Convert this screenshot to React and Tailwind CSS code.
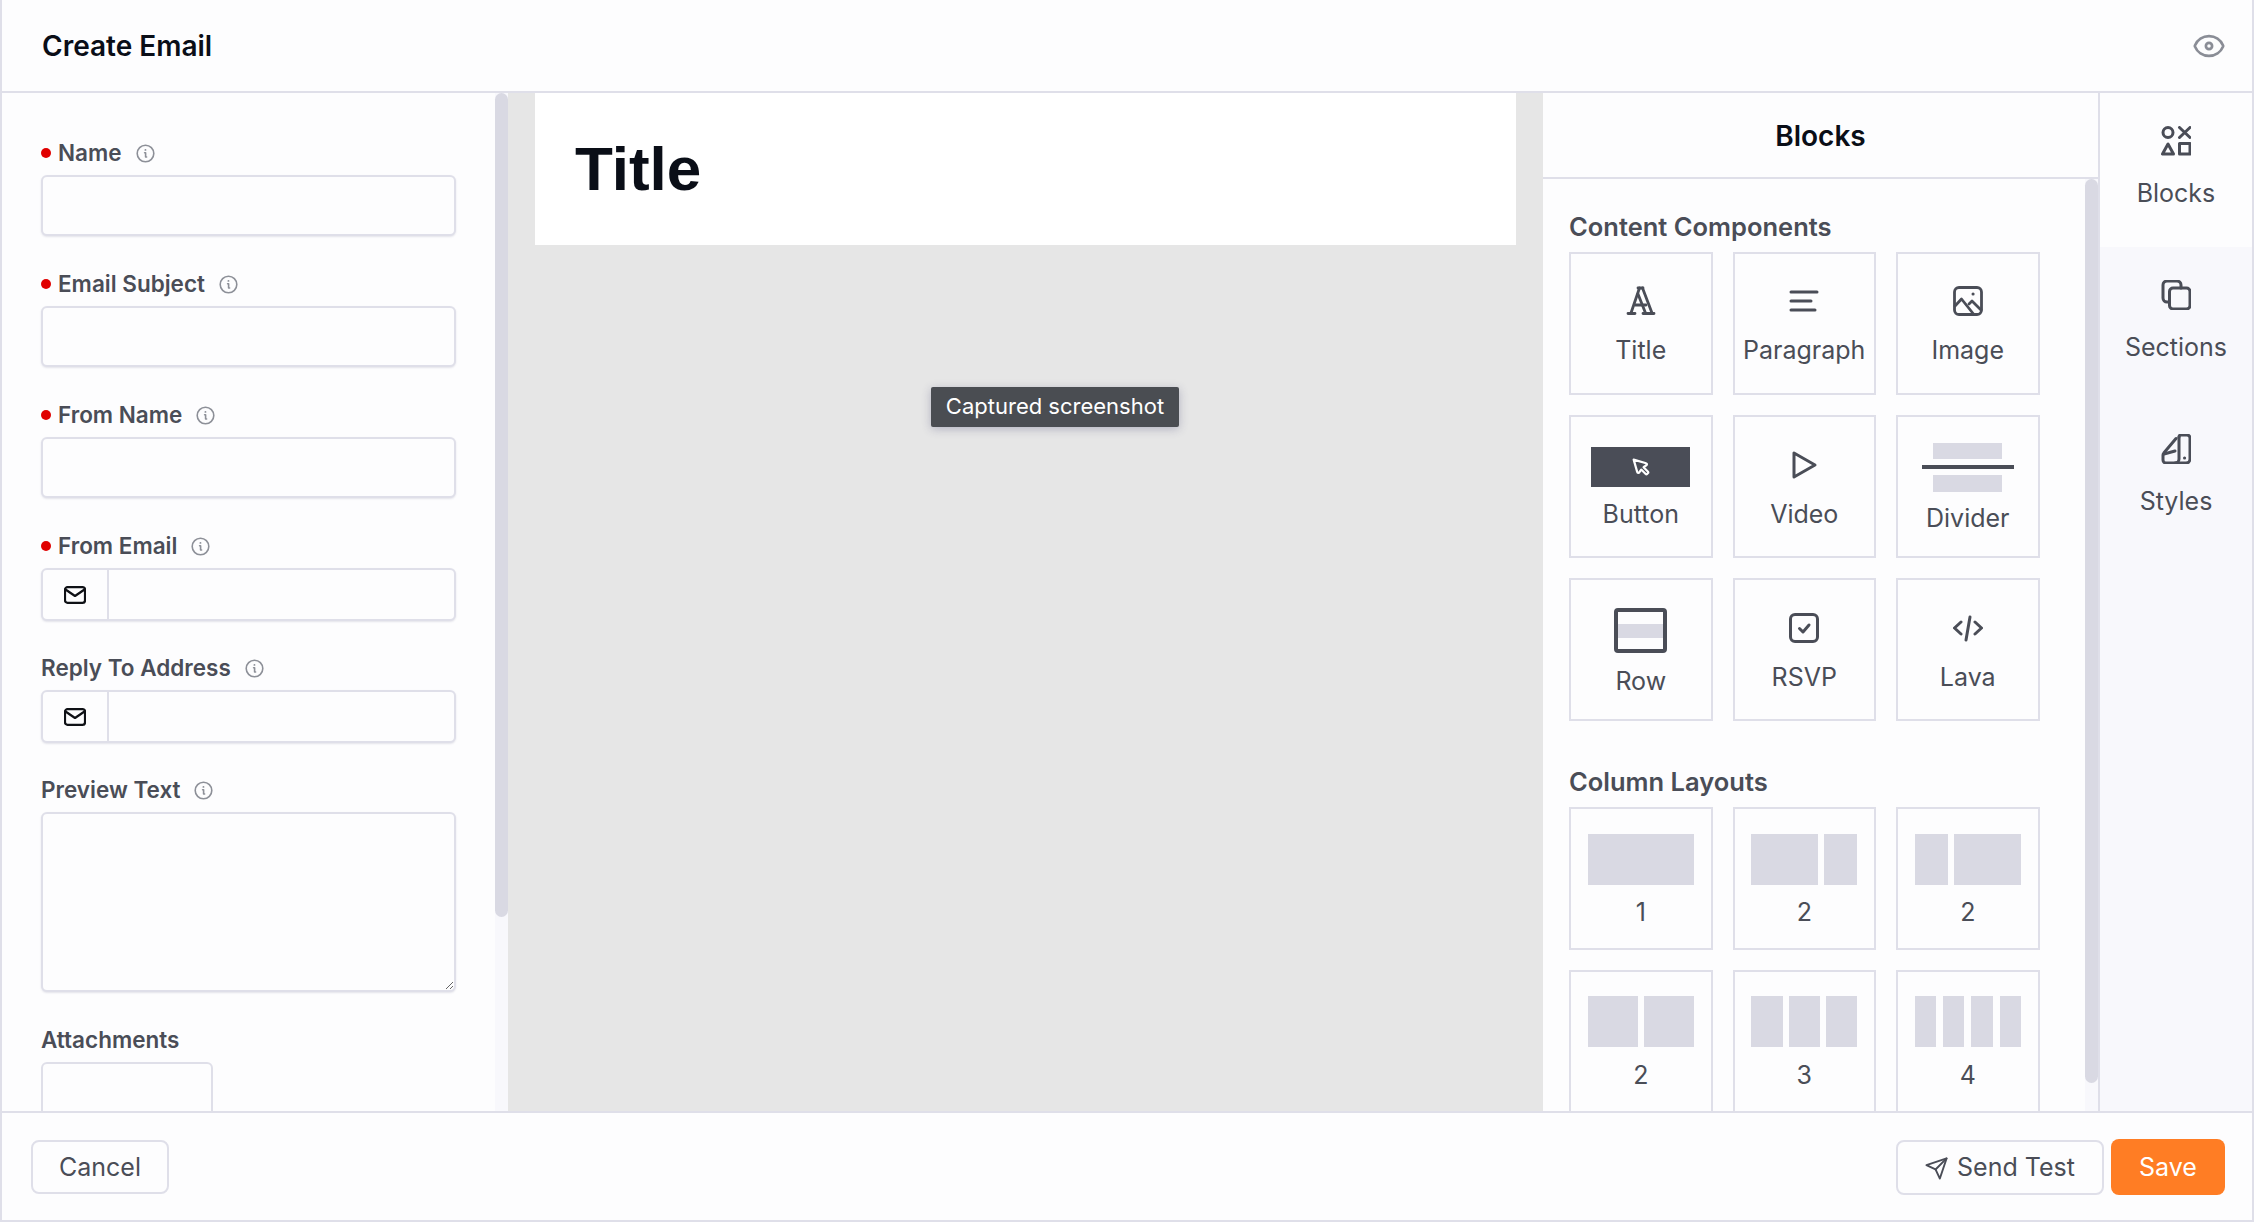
import React from "react";

const ink = "#4a4d57";

function Svg({ w, h, vb, children, sw = 2.5, color = ink, cls = "" }) {
  return (
    <svg width={w} height={h} viewBox={vb} fill="none" stroke={color} strokeWidth={sw} strokeLinecap="round" strokeLinejoin="round" className={"block shrink-0 " + cls}>
      {children}
    </svg>
  );
}

const Info = () => (
  <Svg w={19} h={19} vb="0 0 19 19" sw={1.6} color="#8d9098">
    <circle cx="9.5" cy="9.5" r="8.3" />
    <path d="M8.6 8.8h1v4.2h1" />
    <path d="M9.4 5.9h.1" strokeWidth="1.8" />
  </Svg>
);

const Mail = () => (
  <Svg w={22} h={18} vb="0 0 22 18" sw={2.2} color="#0f1116">
    <rect x="1" y="1.2" width="20" height="15.6" rx="2.5" />
    <path d="M1.5 3.5L11 10l9.5-6.5" />
  </Svg>
);

const Eye = () => (
  <Svg w={34} h={34} vb="0 0 24 24" sw={1.9} color="#8a8d96">
    <path d="M2.06 12.35a1 1 0 0 1 0-.7 10.75 10.75 0 0 1 19.88 0 1 1 0 0 1 0 .7 10.75 10.75 0 0 1-19.88 0" />
    <circle cx="12" cy="12" r="2.2" />
  </Svg>
);

const Send = () => (
  <Svg w={23} h={23} vb="0 0 24 24" sw={2} color={ink}>
    <path d="M22.5 1.5L11 13" />
    <path d="M22.5 1.5L15.5 22.5L11 13L1.5 8.5Z" />
  </Svg>
);

const BlocksIcon = () => (
  <Svg w={30} h={30} vb="0 0 30 30" sw={3}>
    <circle cx="7" cy="6.500" r="5" />
    <path d="M18.500 1.500l10.500 10M29 1.500L18.500 11.500" />
    <path d="M7 18L1.500 28h11z" />
    <rect x="18.500" y="17.500" width="10.500" height="10.500" />
  </Svg>
);

const SectionsIcon = () => (
  <Svg w={30} h={30} vb="0 0 30 30" sw={3}>
    <rect x="8.500" y="8" width="20.500" height="21" rx="3.500" />
    <path d="M8.500 22H6a4 4 0 0 1-4-4V5a4 4 0 0 1 4-4h10a4 4 0 0 1 4 4v3" />
  </Svg>
);

const StylesIcon = () => (
  <Svg w={30} h={30} vb="0 0 30 30" sw={3}>
    <path d="M18 3a2 2 0 0 1 2-2h6a3 3 0 0 1 3 3v21a4 4 0 0 1-4 4H5a3 3 0 0 1-3-3v-5a3 3 0 0 1 .8-2L15 4.500" />
    <path d="M18 3v22a4 4 0 0 1-4 4" />
    <path d="M3 20l11-3" />
    <path d="M23.500 24h.1" />
  </Svg>
);

const TitleIcon = () => (
  <Svg w={30} h={30} vb="0 0 30 30" sw={2.8}>
    <path d="M12 2h5" />
    <path d="M13.500 2L5 27" />
    <path d="M16.500 2L26 27" />
    <path d="M12 8L19.500 27" />
    <path d="M9 19h11" />
    <path d="M2 27.500h7M17 27.500h11" />
  </Svg>
);

const ParagraphIcon = () => (
  <Svg w={30} h={30} vb="0 0 30 30" sw={3}>
    <path d="M2 6h26M2 15h20M2 24h24" />
  </Svg>
);

const ImageIcon = () => (
  <Svg w={30} h={30} vb="0 0 30 30" sw={2.8}>
    <rect x="1.500" y="1.500" width="27" height="27" rx="4.500" />
    <path d="M2 20l6.500-7 12 15" />
    <path d="M16 18l3-3 9 9" />
    <path d="M20 8h.1" strokeWidth="3" />
  </Svg>
);

const VideoIcon = () => (
  <Svg w={30} h={30} vb="0 0 30 30" sw={3}>
    <path d="M5 3v24L26 15z" />
  </Svg>
);

const RsvpIcon = () => (
  <Svg w={30} h={30} vb="0 0 30 30" sw={3}>
    <rect x="1.500" y="1.500" width="27" height="27" rx="4.500" />
    <path d="M10.500 15.500l3.500 3.500 6-7" />
  </Svg>
);

const LavaIcon = () => (
  <Svg w={30} h={30} vb="0 0 30 30" sw={3}>
    <path d="M8 9l-6.500 6L8 21" />
    <path d="M22 9l6.500 6L22 21" />
    <path d="M17 4l-4 23" />
  </Svg>
);

const ButtonIcon = () => (
  <div className="flex h-[40px] w-[99px] items-center justify-center bg-[#4a4d57]">
    <Svg w={22} h={22} vb="0 0 24 24" sw={2.4} color="#ffffff">
      <path d="M7.904 17.563a1.2 1.2 0 0 0 2.228 .308l2.09 -3.093l4.907 4.907a1.067 1.067 0 0 0 1.509 0l1.047 -1.047a1.067 1.067 0 0 0 0 -1.509l-4.907 -4.907l3.113 -2.09a1.2 1.2 0 0 0 -.309 -2.228l-13.582 -3.904l3.904 13.563z" />
    </Svg>
  </div>
);

const DividerIcon = () => (
  <div className="flex w-[92px] flex-col items-center">
    <div className="h-[16px] w-[69px] bg-[#d9d9e3]" />
    <div className="mt-[6px] h-[4px] w-[92px] bg-[#4a4d57]" />
    <div className="mt-[6px] h-[17px] w-[69px] bg-[#d9d9e3]" />
  </div>
);

const RowIcon = () => (
  <div className="flex h-[45px] w-[53px] flex-col justify-center rounded-[4px] border-[4px] border-[#4a4d57] bg-[#fdfdfe]">
    <div className="h-[14px] w-full bg-[#d9d9e3]" />
  </div>
);

function Tile({ pad, gap, label, children }) {
  return (
    <div className={"flex h-[143px] w-full flex-col items-center border-2 border-[#dfdfe9] " + pad}>
      {children}
      <div className={"h-[32px] text-[25px] leading-[32px] text-[#4a4d57] " + gap}>{label}</div>
    </div>
  );
}

function Cols({ pad, gap, label, gapClass = "gap-[6px]", cols }) {
  return (
    <Tile pad={pad} gap={gap} label={label}>
      <div className={"flex h-[51px] w-[106px] " + gapClass}>
        {cols.map((c, i) => (
          <div key={i} className={"bg-[#d9d9e3] " + c} />
        ))}
      </div>
    </Tile>
  );
}

function Label({ text, required }) {
  return (
    <div className="mb-[8px] flex h-[28px] items-center">
      {required && <span className="mr-[7px] h-[10px] w-[10px] rounded-full bg-[#e00000]" />}
      <span className="text-[22.5px] font-semibold leading-[28px] text-[#4a4d57]">{text}</span>
      <span className="ml-[14px]"><Info /></span>
    </div>
  );
}

const inputCls = "block w-full rounded-[6px] border-2 border-[#dfdfe9] bg-[#fdfdfe] shadow-[0_1px_2px_rgba(70,70,110,0.14)] outline-none";

function TextField({ text, required }) {
  return (
    <div className="mb-[34px]">
      <Label text={text} required={required} />
      <input className={inputCls + " h-[61px]"} />
    </div>
  );
}

function MailField({ text, required }) {
  return (
    <div className="mb-[33px]">
      <Label text={text} required={required} />
      <div className="flex h-[53px] w-full overflow-hidden rounded-[6px] border-2 border-[#dfdfe9] bg-[#fdfdfe] shadow-[0_1px_2px_rgba(70,70,110,0.14)]">
        <div className="flex w-[66px] shrink-0 items-center justify-center border-r-2 border-[#dfdfe9]">
          <Mail />
        </div>
        <input className="min-w-0 flex-1 bg-transparent outline-none" />
      </div>
    </div>
  );
}

function Track({ thumb }) {
  return (
    <div className="w-[13px] shrink-0 bg-[#f8f8fc]">
      <div className={"w-full rounded-full bg-[#d9d9e3] " + thumb} />
    </div>
  );
}

function SideTab({ active, label, children }) {
  return (
    <div className={"flex h-[154px] flex-col items-center pt-[33px] " + (active ? "bg-[#fdfdfe]" : "bg-[#f8f8fc]")}>
      {children}
      <div className="mt-[21px] h-[32px] text-[25px] leading-[32px] text-[#4a4d57]">{label}</div>
    </div>
  );
}

export default function App() {
  return (
    <div className="flex h-screen flex-col overflow-hidden border-x-2 border-b-2 border-[#dfdfe9] bg-[#fdfdfe] font-['Inter',sans-serif]">
      <header className="flex h-[93px] shrink-0 items-center justify-between border-b-2 border-[#dfdfe9] pl-[40px] pr-[26px]">
        <h1 className="text-[28px] font-semibold leading-[36px] text-[#0a0e17]">Create Email</h1>
        <Eye />
      </header>

      <main className="flex min-h-0 flex-1 overflow-hidden">
        <section className="flex w-[506px] shrink-0">
          <div className="min-w-0 flex-1 overflow-hidden pl-[39px] pr-[39px] pt-[46px]">
            <TextField text="Name" required />
            <TextField text="Email Subject" required />
            <TextField text="From Name" required />
            <MailField text="From Email" required />
            <MailField text="Reply To Address" />
            <div className="mb-[34px]">
              <Label text="Preview Text" />
              <textarea className={inputCls + " h-[180px]"} />
            </div>
            <div className="mb-[8px] h-[28px] text-[22.5px] font-semibold leading-[28px] text-[#4a4d57]">Attachments</div>
            <div className="h-[120px] w-[172px] rounded-[6px] border-2 border-[#dfdfe9]" />
          </div>
          <Track thumb="h-[824px]" />
        </section>

        <section className="relative flex-1 bg-[#e6e6e6] px-[27px]">
          <div className="flex h-[152px] items-center bg-white pl-[40px] font-['Liberation_Sans',Arial,sans-serif] text-[62px] font-bold leading-[70px] text-[#0a0e17]">
            Title
          </div>
          <div className="absolute left-[423px] top-[294px] flex h-[40px] w-[248px] items-center justify-center rounded-[2px] bg-[#4a4d52] pb-[1px] text-[22px] text-white shadow-[0_2px_10px_rgba(60,60,110,0.3)]">
            Captured screenshot
          </div>
        </section>

        <section className="flex w-[555px] shrink-0 flex-col bg-[#fdfdfe]">
          <div className="flex h-[86px] shrink-0 items-center justify-center border-b-2 border-[#dfdfe9] pt-[1px] text-[28px] font-semibold text-[#0a0e17]">
            Blocks
          </div>
          <div className="flex min-h-0 flex-1">
            <div className="min-w-0 flex-1 overflow-hidden pl-[26px] pt-[33px]">
              <h2 className="mb-[10px] h-[30px] text-[25.5px] font-semibold leading-[30px] text-[#4a4d57]">Content Components</h2>
              <div className="mb-[46px] grid grid-cols-[143.5px_143.5px_143.5px] gap-[20px]">
                <Tile pad="pt-[32px]" gap="mt-[18px]" label="Title"><TitleIcon /></Tile>
                <Tile pad="pt-[32px]" gap="mt-[18px]" label="Paragraph"><ParagraphIcon /></Tile>
                <Tile pad="pt-[32px]" gap="mt-[18px]" label="Image"><ImageIcon /></Tile>
                <Tile pad="pt-[30px]" gap="mt-[11px]" label="Button"><ButtonIcon /></Tile>
                <Tile pad="pt-[33px]" gap="mt-[18px]" label="Video"><VideoIcon /></Tile>
                <Tile pad="pt-[26px]" gap="mt-[10px]" label="Divider"><DividerIcon /></Tile>
                <Tile pad="pt-[28px]" gap="mt-[12px]" label="Row"><RowIcon /></Tile>
                <Tile pad="pt-[33px]" gap="mt-[18px]" label="RSVP"><RsvpIcon /></Tile>
                <Tile pad="pt-[33px]" gap="mt-[18px]" label="Lava"><LavaIcon /></Tile>
              </div>
              <h2 className="mb-[10px] h-[30px] text-[25.5px] font-semibold leading-[30px] text-[#4a4d57]">Column Layouts</h2>
              <div className="grid grid-cols-[143.5px_143.5px_143.5px] gap-[20px]">
                <Cols pad="pt-[25px]" gap="mt-[11px]" label="1" cols={["flex-1"]} />
                <Cols pad="pt-[25px]" gap="mt-[11px]" label="2" cols={["flex-[2]", "flex-1"]} />
                <Cols pad="pt-[25px]" gap="mt-[11px]" label="2" cols={["flex-1", "flex-[2]"]} />
                <Cols pad="pt-[24px]" gap="mt-[12px]" label="2" cols={["flex-1", "flex-1"]} />
                <Cols pad="pt-[24px]" gap="mt-[12px]" label="3" cols={["flex-1", "flex-1", "flex-1"]} />
                <Cols pad="pt-[24px]" gap="mt-[12px]" label="4" gapClass="gap-[7px]" cols={["flex-1", "flex-1", "flex-1", "flex-1"]} />
              </div>
            </div>
            <Track thumb="h-[904px]" />
          </div>
        </section>

        <aside className="w-[154px] shrink-0 border-l-2 border-[#dfdfe9] bg-[#f8f8fc]">
          <SideTab active label="Blocks"><BlocksIcon /></SideTab>
          <SideTab label="Sections"><SectionsIcon /></SideTab>
          <SideTab label="Styles"><StylesIcon /></SideTab>
        </aside>
      </main>

      <footer className="flex h-[109px] shrink-0 items-center justify-between border-t-2 border-[#dfdfe9] pl-[29px] pr-[27px] pt-[1px]">
        <button className="h-[54px] w-[138px] rounded-[8px] border-2 border-[#dfdfe9] pt-[2px] text-[25px] text-[#4a4d57]">Cancel</button>
        <div className="flex items-center gap-[7px]">
          <button className="flex h-[55px] w-[208px] items-center justify-center gap-[9px] rounded-[8px] border-2 border-[#dfdfe9] pt-[2px] text-[25px] text-[#4a4d57]">
            <Send />
            Send Test
          </button>
          <button className="h-[56px] w-[114px] rounded-[8px] bg-[#ff7d24] pt-[2px] text-[25px] text-white">Save</button>
        </div>
      </footer>
    </div>
  );
}
